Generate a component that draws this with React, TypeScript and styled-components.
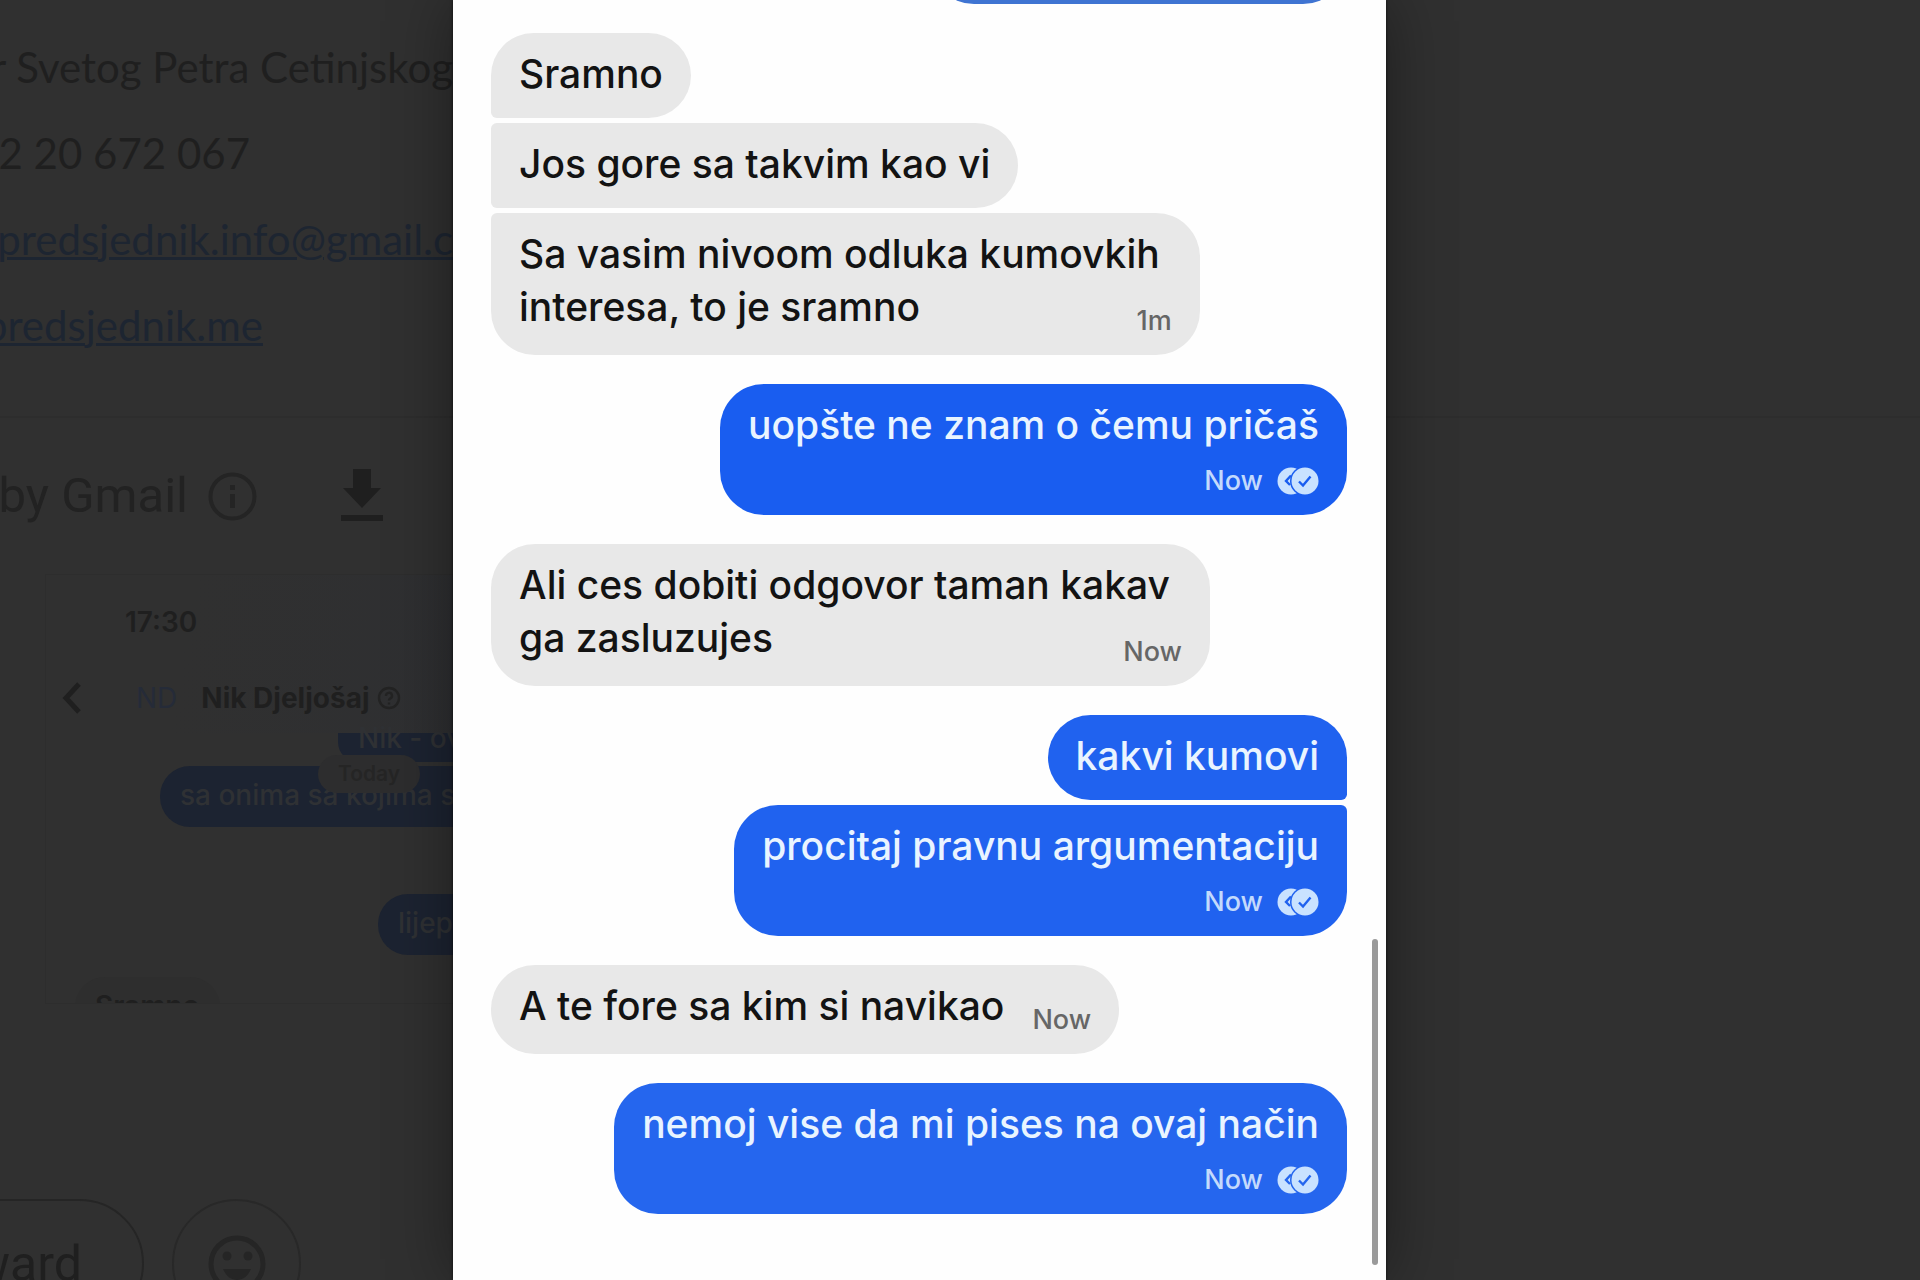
import React from "react";
import styled, { createGlobalStyle, css } from "styled-components";

const GlobalStyle = createGlobalStyle`
  *, *::before, *::after { box-sizing: border-box; }
  body { margin: 0; background: #303030; }
  p { margin: 0; }
  button { font: inherit; color: inherit; background: none; border: 0; padding: 0; cursor: pointer; }
`;

const uiFont = `Inter, "Noto Sans", sans-serif`;
const mailFont = `Lato, "Open Sans", sans-serif`;
const gmailFont = `Roboto, "Noto Sans", sans-serif`;

/* The mail page and the lightbox share one grid cell. */
const Page = styled.div`
  display: grid;
  grid-template: 100% / 100%;
  height: 100vh;
  overflow: hidden;
  background: #303030;
`;

/* ---------- dimmed mail page ---------- */

const Mail = styled.main`
  grid-area: 1 / 1;
  display: flex;
  flex-direction: column;
  min-width: 0;
  overflow: hidden;
  color: #1f1f1f;

  > * { flex: none; }
`;

const Signature = styled.address`
  padding: 24px 0 48px;
  border-bottom: 2px solid #2d2d2d;
  font: normal 400 42px/86px ${mailFont};
`;

const SignatureLine = styled.div<{ $end: number }>`
  display: flex;
  justify-content: flex-end;
  width: ${(p) => p.$end}px;
  white-space: nowrap;
`;

const MailLink = styled.a`
  color: #1d2531;
  text-decoration: underline;
  text-decoration-thickness: 3px;
`;

const ScanBar = styled.div`
  display: flex;
  align-items: center;
  justify-content: flex-end;
  gap: 20px;
  width: 384px;
  height: 60px;
  margin-top: 48px;
  font: 400 49px/60px ${gmailFont};
  white-space: nowrap;
  color: #222222;
`;

const IconButton = styled.button`
  display: flex;
  flex: none;
  color: #242424;
`;

const DownloadButton = styled(IconButton)`
  margin-left: 63px;
  color: #1f1f1f;
`;

const Attachment = styled.section`
  width: 720px;
  height: 430px;
  margin: 48px 0 0 45px;
  border: 1px solid #2d2d2d;
  overflow: hidden;
  font: 600 28px/36px ${uiFont};
`;

const ShotHeader = styled.header`
  height: 158px;
  padding: 29px 16px 0;
  background: linear-gradient(100deg, #303030 20%, #2e2f32 70%);
`;

const Clock = styled.p`
  padding-left: 63px;
`;

const Contact = styled.div`
  display: flex;
  align-items: center;
  height: 36px;
  margin-top: 40px;
`;

const Initials = styled.span`
  margin: 0 24px 0 54px;
  font-weight: 400;
  font-size: 28px;
  color: #252b38;
`;

const ContactName = styled.span`
  margin-right: 8px;
  font-size: 28px;
  font-weight: 700;
`;

const ShotThread = styled.div`
  position: relative;
  display: flex;
  flex-direction: column;
`;

const ShotBubble = styled.p<{ $left: number; $gap?: number; $grey?: boolean; $cut?: boolean }>`
  height: ${(p) => (p.$cut ? 29 : 61)}px;
  margin: ${(p) => p.$gap ?? 0}px 0 0 ${(p) => p.$left}px;
  padding: 0 20px;
  border-radius: ${(p) => (p.$cut ? "0 0 0 20px" : "30px")};
  line-height: ${(p) => (p.$cut ? 10 : 58)}px;
  white-space: nowrap;
  background: ${(p) => (p.$grey ? "#2e2e2e" : "#1c2331")};
  color: ${(p) => (p.$grey ? "#1f1f1f" : "#2f3134")};
  font-weight: 500;
  ${(p) => p.$grey && css`align-self: flex-start; font-weight: 600;`}
`;

const DayPill = styled.span`
  position: absolute;
  top: 22px;
  left: 272px;
  padding: 2px 20px;
  border-radius: 19px;
  background: #2d2d2e;
  color: #252525;
  font-size: 21px;
  font-weight: 600;
  line-height: 34px;
`;

const Actions = styled.div`
  display: flex;
  align-items: flex-start;
  justify-content: flex-end;
  gap: 28px;
  width: 301px;
  margin-top: 195px;
  font: 400 50px/60px ${gmailFont};
`;

const ForwardButton = styled.button`
  flex: none;
  height: 129px;
  padding: 0 60px;
  border: 2px solid #252525;
  border-radius: 65px;
`;

const EmojiButton = styled.button`
  display: flex;
  flex: none;
  align-items: center;
  justify-content: center;
  width: 129px;
  height: 129px;
  border: 2px solid #282828;
  border-radius: 50%;
  color: #252525;
`;

/* ---------- lightbox with the chat picture ---------- */

const Lightbox = styled.div`
  grid-area: 1 / 1;
  z-index: 1;
  display: grid;
  grid-template: 100% / 453fr 933fr 534fr;
`;

const Picture = styled.section`
  grid-column: 2;
  position: relative;
  display: flex;
  flex-direction: column;
  justify-content: flex-end;
  gap: 29px;
  padding: 0 39px 66px 38px;
  background: #fefefe;
  box-shadow: 0 0 60px rgba(0, 0, 0, 0.4), 0 0 3px rgba(0, 0, 0, 0.7);
  overflow: hidden;
  font-family: ${uiFont};
`;

const Group = styled.div<{ $own?: boolean }>`
  display: flex;
  flex: none;
  flex-direction: column;
  align-items: ${(p) => (p.$own ? "flex-end" : "flex-start")};
  gap: 5px;
`;

type Layout = "plain" | "beside" | "below";

const Bubble = styled.article<{ $own?: boolean; $first: boolean; $last: boolean; $tone?: string }>`
  padding: 14px 28px 18px;
  background: ${(p) => (p.$own ? p.$tone : "#e8e8e8")};
  color: ${(p) => (p.$own ? "#e9f4ff" : "#131313")};
  border-radius: ${(p) => {
    const top = p.$first ? 44 : 6;
    const bottom = p.$last ? 44 : 6;
    return p.$own ? `44px ${top}px ${bottom}px 44px` : `${top}px 44px 44px ${bottom}px`;
  }};
`;

const Text = styled.p`
  font-size: 39px;
  font-weight: 500;
  line-height: 53px;
`;

const LeadText = styled(Text)`
  padding-right: 12px;
`;

/* Last line of a message, with the time beside it or below it. */
const LastRow = styled.div<{ $layout: Layout }>`
  display: flex;
  ${(p) => p.$layout === "beside" && css`
    align-items: flex-end;
    justify-content: space-between;
    gap: 28px;
    height: 57px;
    ${Text} { align-self: flex-start; }
  `}
  ${(p) => p.$layout === "below" && css`
    flex-direction: column;
    align-items: flex-end;
    gap: 14px;
  `}
`;

const Meta = styled.footer<{ $own?: boolean }>`
  display: flex;
  align-items: center;
  gap: 14px;
  font-size: 27px;
  font-weight: 500;
  line-height: 32px;
  color: ${(p) => (p.$own ? "#c3dafc" : "#666666")};
`;

const PartBubble = styled.div`
  width: 417px;
  height: 90px;
  border-radius: 44px;
  background: #3f74d2;
`;

const ScrollThumb = styled.div`
  position: absolute;
  right: 8px;
  bottom: 15px;
  width: 6px;
  height: 326px;
  border-radius: 3px;
  background: #9a9a9a;
`;

/* ---------- drawings ---------- */

const ReadMark = ({ tone }: { tone: string }) => (
  <svg width="42" height="28" viewBox="0 0 42 28" role="img" aria-label="Read">
    <circle cx="14" cy="14" r="13.5" fill="#c9e2ff" />
    <path d="M14 8.5 L9 14 L13 18" fill="none" stroke={tone} strokeWidth="2.4" />
    <circle cx="28" cy="14" r="15" fill={tone} />
    <circle cx="28" cy="14" r="13.5" fill="#c9e2ff" />
    <path d="M22 14.5 L26 18.5 L33.5 9.5" fill="none" stroke={tone} strokeWidth="2.4" />
  </svg>
);

const InfoIcon = () => (
  <svg width="49" height="49" viewBox="0 0 49 49" fill="currentColor">
    <circle cx="24.5" cy="24.5" r="22" fill="none" stroke="currentColor" strokeWidth="4" />
    <rect x="22" y="22" width="5" height="14" />
    <rect x="22" y="13" width="5" height="5" />
  </svg>
);

const DownloadIcon = () => (
  <svg width="44" height="54" viewBox="0 0 44 54" fill="currentColor">
    <path d="M13 0H31V19H41L22 39L3 19H13Z" />
    <rect x="1" y="46" width="42" height="6" />
  </svg>
);

const BackIcon = () => (
  <svg width="20" height="32" viewBox="0 0 20 32" fill="none" stroke="currentColor" strokeWidth="5">
    <path d="M17 2L4 16L17 30" />
  </svg>
);

const HelpIcon = () => (
  <svg width="24" height="24" viewBox="0 0 24 24" fill="none" stroke="#232323" strokeWidth="2.4">
    <circle cx="12" cy="12" r="10" />
    <path d="M9 10a3 3 0 1 1 4 2.6c-1 .5-1 1-1 2M12 16.500v2" />
  </svg>
);

const SmileIcon = () => (
  <svg width="58" height="58" viewBox="0 0 58 58" fill="currentColor">
    <circle cx="29" cy="29" r="26" fill="none" stroke="currentColor" strokeWidth="5" />
    <circle cx="19" cy="21" r="4.500" />
    <circle cx="40" cy="21" r="4.500" />
    <path d="M15 34H43C40 41 35 45 29 45S18 41 15 34Z" />
  </svg>
);

/* ---------- content ---------- */

type Message = { lead?: string; text: string; time?: string; layout: Layout };
type Turn = { own?: boolean; tone?: string; messages: Message[] };

const turns: Turn[] = [
  {
    messages: [
      { text: "Sramno", layout: "plain" },
      { text: "Jos gore sa takvim kao vi", layout: "plain" },
      { lead: "Sa vasim nivoom odluka kumovkih", text: "interesa, to je sramno", time: "1m", layout: "beside" },
    ],
  },
  { own: true, tone: "#195df0", messages: [{ text: "uopšte ne znam o čemu pričaš", time: "Now", layout: "below" }] },
  { messages: [{ lead: "Ali ces dobiti odgovor taman kakav", text: "ga zasluzujes", time: "Now", layout: "beside" }] },
  {
    own: true,
    tone: "#2062ef",
    messages: [
      { text: "kakvi kumovi", layout: "plain" },
      { text: "procitaj pravnu argumentaciju", time: "Now", layout: "below" },
    ],
  },
  { messages: [{ text: "A te fore sa kim si navikao", time: "Now", layout: "beside" }] },
  { own: true, tone: "#2566ee", messages: [{ text: "nemoj vise da mi pises na ovaj način", time: "Now", layout: "below" }] },
];

const MailPage = () => (
  <Mail>
    <Signature>
      <SignatureLine $end={453}>Bulevar Svetog Petra Cetinjskog</SignatureLine>
      <SignatureLine $end={250}>+382 20 672 067</SignatureLine>
      <SignatureLine $end={511}>
        <MailLink href="mailto:predsjednik.info@gmail.com">predsjednik.info@gmail.com</MailLink>
      </SignatureLine>
      <SignatureLine $end={263}>
        <MailLink href="#web">www.predsjednik.me</MailLink>
      </SignatureLine>
    </Signature>
    <ScanBar>
      <span>Scanned by Gmail</span>
      <IconButton aria-label="About scanning"><InfoIcon /></IconButton>
      <DownloadButton aria-label="Download"><DownloadIcon /></DownloadButton>
    </ScanBar>
    <Attachment>
      <ShotHeader>
        <Clock>17:30</Clock>
        <Contact>
          <BackIcon />
          <Initials>ND</Initials>
          <ContactName>Nik Djeljošaj</ContactName>
          <HelpIcon />
        </Contact>
      </ShotHeader>
      <ShotThread>
        <ShotBubble $left={292} $cut>Nik - ovo</ShotBubble>
        <ShotBubble $left={114} $gap={4}>sa onima sa kojima si</ShotBubble>
        <ShotBubble $left={332} $gap={67}>lijepo</ShotBubble>
        <ShotBubble $left={29} $gap={22} $grey>Sramno</ShotBubble>
        <DayPill>Today</DayPill>
      </ShotThread>
    </Attachment>
    <Actions>
      <ForwardButton>Forward</ForwardButton>
      <EmojiButton aria-label="Add reaction"><SmileIcon /></EmojiButton>
    </Actions>
  </Mail>
);

export default function App() {
  return (
    <Page>
      <GlobalStyle />
      <MailPage />
      <Lightbox>
        <Picture>
          <Group $own><PartBubble /></Group>
          {turns.map((turn, t) => (
            <Group key={t} $own={turn.own}>
              {turn.messages.map((m, i) => (
                <Bubble
                  key={i}
                  $own={turn.own}
                  $tone={turn.tone}
                  $first={i === 0}
                  $last={i === turn.messages.length - 1}
                >
                  {m.lead && <LeadText>{m.lead}</LeadText>}
                  <LastRow $layout={m.layout}>
                    <Text>{m.text}</Text>
                    {m.time && (
                      <Meta $own={turn.own}>
                        <time>{m.time}</time>
                        {turn.own && <ReadMark tone={turn.tone!} />}
                      </Meta>
                    )}
                  </LastRow>
                </Bubble>
              ))}
            </Group>
          ))}
          <ScrollThumb />
        </Picture>
      </Lightbox>
    </Page>
  );
}
